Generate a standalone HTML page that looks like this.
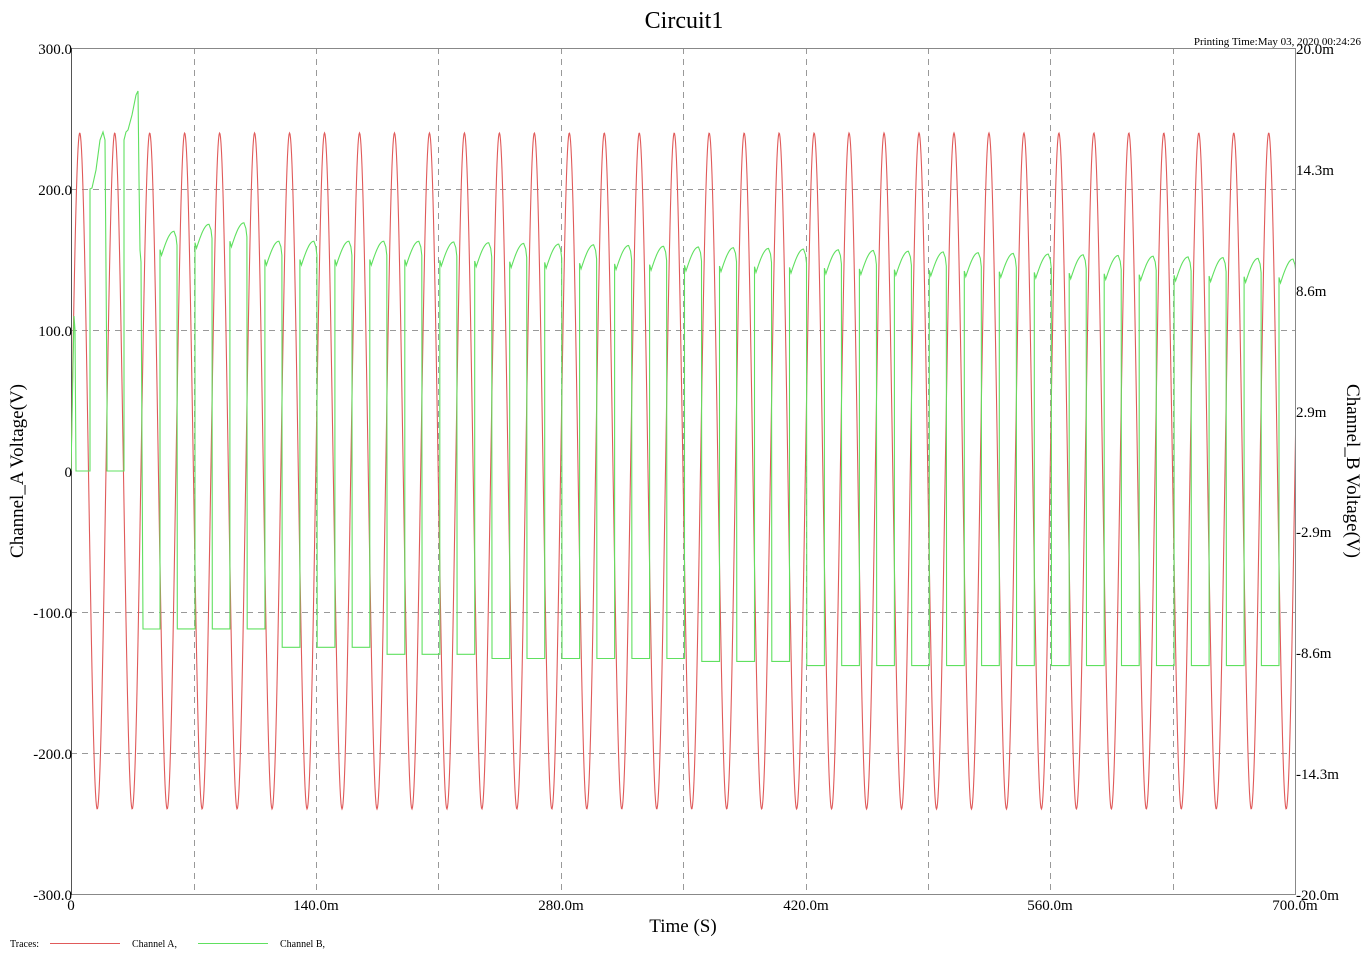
<!DOCTYPE html>
<html><head><meta charset="utf-8"><style>
html,body{margin:0;padding:0;background:#fff;}
body{width:1371px;height:969px;overflow:hidden;position:relative;font-family:"Liberation Serif",serif;}
svg{position:absolute;left:0;top:0;}
</style></head><body>
<svg width="1371" height="969" viewBox="0 0 1371 969" xmlns="http://www.w3.org/2000/svg" font-family="Liberation Serif, serif">
<defs><clipPath id="pc"><rect x="71" y="40" width="1224" height="860"/></clipPath></defs>
<text x="684" y="28" font-size="24" text-anchor="middle">Circuit1</text>
<text x="1361" y="45" font-size="11" text-anchor="end">Printing Time:May 03, 2020 00:24:26</text>
<g stroke="#999" stroke-width="1" stroke-dasharray="6,5" fill="none">
<line x1="71" y1="189.5" x2="1295" y2="189.5"/>
<line x1="71" y1="330.5" x2="1295" y2="330.5"/>
<line x1="71" y1="612.5" x2="1295" y2="612.5"/>
<line x1="71" y1="753.5" x2="1295" y2="753.5"/>
<line x1="194.5" y1="48" x2="194.5" y2="894"/>
<line x1="316.5" y1="48" x2="316.5" y2="894"/>
<line x1="438.5" y1="48" x2="438.5" y2="894"/>
<line x1="561.5" y1="48" x2="561.5" y2="894"/>
<line x1="683.5" y1="48" x2="683.5" y2="894"/>
<line x1="806.5" y1="48" x2="806.5" y2="894"/>
<line x1="928.5" y1="48" x2="928.5" y2="894"/>
<line x1="1050.5" y1="48" x2="1050.5" y2="894"/>
<line x1="1173.5" y1="48" x2="1173.5" y2="894"/>
</g>
<rect x="71.5" y="48.5" width="1224" height="846" fill="none" stroke="#888" stroke-width="1"/>
<line x1="71.5" y1="48" x2="71.5" y2="895" stroke="#555"/>
<g clip-path="url(#pc)">
<path id="red" fill="none" stroke="#e05a5a" stroke-width="1.1" d=""/>
<path id="green" fill="none" stroke="#60e060" stroke-width="1.1" d=""/>
</g>
<g font-size="15" text-anchor="end">
<text x="72" y="54">300.0</text>
<text x="72" y="195">200.0</text>
<text x="72" y="336">100.0</text>
<text x="72" y="477">0</text>
<text x="72" y="618">-100.0</text>
<text x="72" y="759">-200.0</text>
<text x="72" y="900">-300.0</text>
</g>
<g font-size="15">
<text x="1296" y="54">20.0m</text>
<text x="1296" y="175">14.3m</text>
<text x="1296" y="296">8.6m</text>
<text x="1296" y="417">2.9m</text>
<text x="1296" y="537">-2.9m</text>
<text x="1296" y="658">-8.6m</text>
<text x="1296" y="779">-14.3m</text>
<text x="1296" y="900">-20.0m</text>
</g>
<g font-size="15" text-anchor="middle">
<text x="71" y="910">0</text>
<text x="316" y="910">140.0m</text>
<text x="561" y="910">280.0m</text>
<text x="806" y="910">420.0m</text>
<text x="1050" y="910">560.0m</text>
<text x="1295" y="910">700.0m</text>
</g>
<text x="683" y="932" font-size="19" text-anchor="middle">Time (S)</text>
<text transform="translate(23,471) rotate(-90)" font-size="19" text-anchor="middle">Channel_A Voltage(V)</text>
<text transform="translate(1347,471) rotate(90)" font-size="19" text-anchor="middle">Channel_B Voltage(V)</text>
<g font-size="10">
<text x="10" y="947">Traces:</text>
<rect x="50" y="943" width="70" height="1" fill="#e05a5a"/>
<text x="132" y="947">Channel A,</text>
<rect x="198" y="943" width="70" height="1" fill="#60e060"/>
<text x="280" y="947">Channel B,</text>
</g>
</svg>
<script>
(function(){
var P=34.97,d=[];
for(var x=71;x<=1296;x+=0.5){var y=471-338*Math.sin(2*Math.PI*(x-71)/P);d.push((d.length?'L':'M')+x.toFixed(1)+','+y.toFixed(1));}
document.getElementById('red').setAttribute('d',d.join(''));
function Y(v){return 471-1.41*v;}
var g="M71,471L72,420L74,316L75,330L76,471L90,471L90,189L92,188L96,170L100,140L103,132L105,140L107,400L107,471L124,471L124,140L126,132L128,130L132,115L136,95L138,91L139,180L140,250L141,262L143,629L160,629";
function peak(x){if(x<260)return [170,175,176][Math.min(2,Math.round((x-160)/35))];if(x<400)return 163;return 163-(x-400)/900*13;}
function low(x){if(x<240)return -112;if(x<350)return -125;if(x<450)return -130;if(x<650)return -133;if(x<780)return -135;return -138;}
for(var k=0;;k++){var r=160+P*k;if(r>1300)break;var pk=peak(r),dp=pk-17;
g+="L"+r.toFixed(1)+","+Y(dp+4).toFixed(1)+"L"+(r+1.5).toFixed(1)+","+Y(dp).toFixed(1);
for(var t=2;t<=14;t+=1){var v=dp+(pk-dp)*Math.sin(Math.PI/2*(t-1.5)/12.5);g+="L"+(r+t).toFixed(1)+","+Y(v).toFixed(1);}
g+="L"+(r+16).toFixed(1)+","+Y(pk-4).toFixed(1)+"L"+(r+17).toFixed(1)+","+Y(pk-10).toFixed(1);
var lw=low(r);g+="L"+(r+17.3).toFixed(1)+","+Y(lw).toFixed(1)+"L"+(r+P).toFixed(1)+","+Y(lw).toFixed(1);}
document.getElementById('green').setAttribute('d',g);
})();
</script>
</body></html>
